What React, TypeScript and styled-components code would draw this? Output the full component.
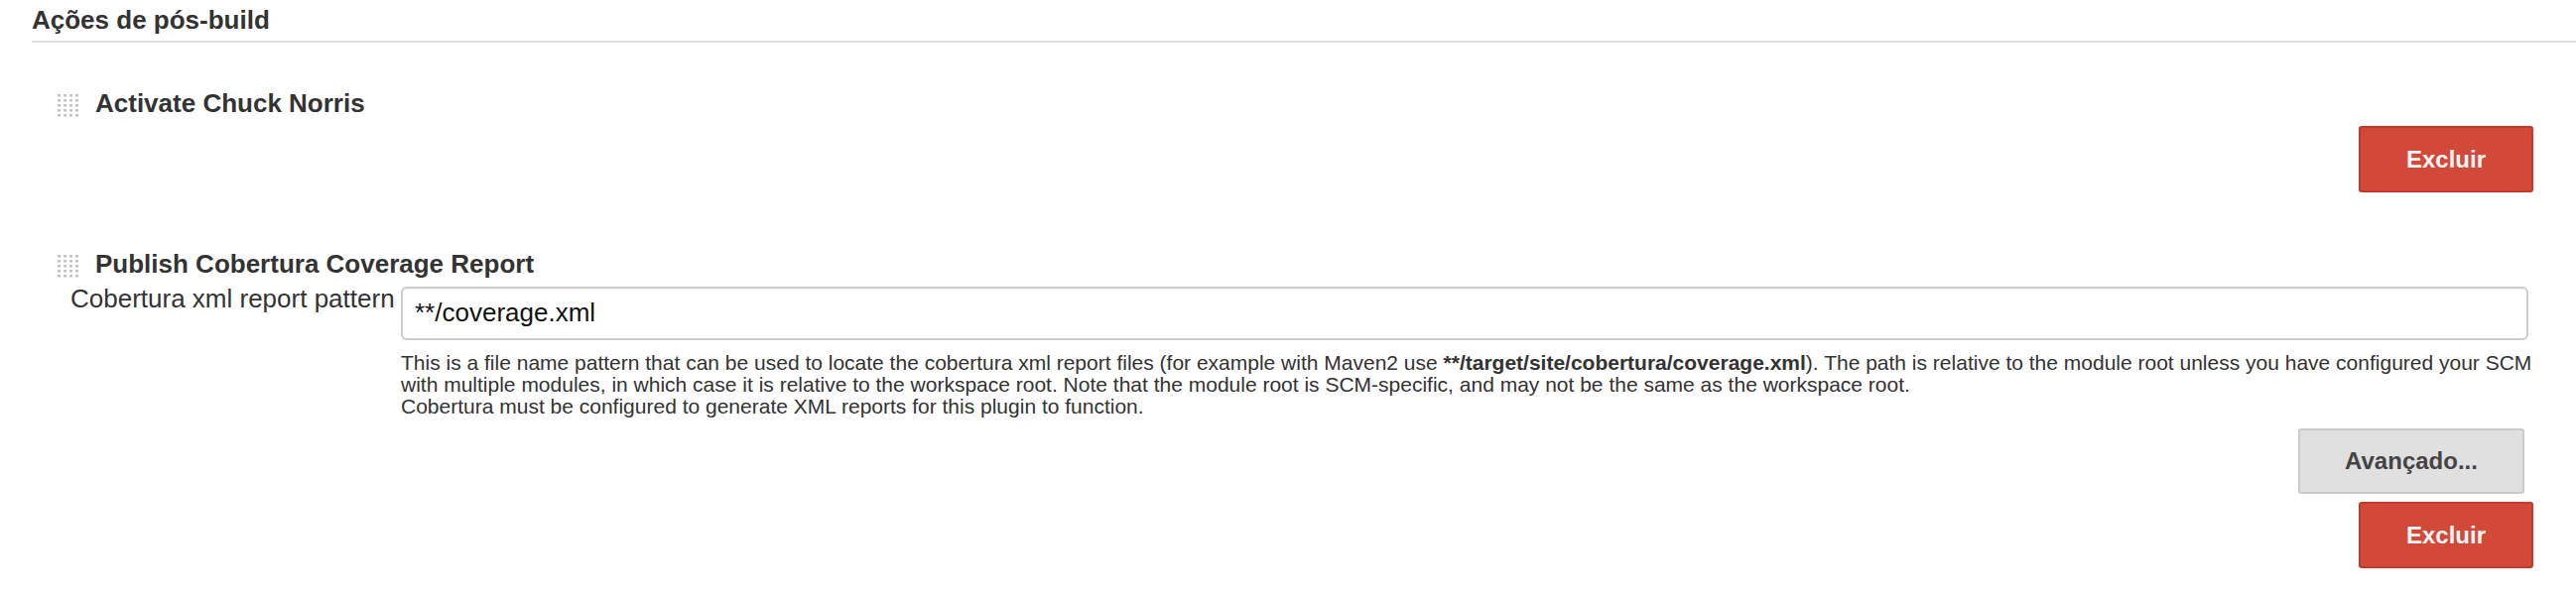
import styled, { createGlobalStyle } from 'styled-components';

const GlobalStyle = createGlobalStyle`
    html, body {
        margin: 0;
        padding: 0;
        background: #fff;
    }
    body {
        font-family: "Liberation Sans", Arial, Helvetica, sans-serif;
        color: #333;
    }
`;

function Grip() {
    const dots = [];
    for (let r = 0; r < 5; r++) {
        for (let c = 0; c < 4; c++) {
            dots.push(<rect key={`${r}-${c}`} x={1 + c * 6} y={1 + r * 5} width={3} height={2.5} fill="#c4c4c4" />);
        }
    }
    return (
        <GripIcon width="22" height="25" viewBox="0 0 22 25">
            {dots}
        </GripIcon>
    );
}

function App() {
    return (
        <Page>
            <GlobalStyle />
            <SectionTitle>Ações de pós-build</SectionTitle>

            <Block>
                <BlockHeader>
                    <Grip />
                    <BlockTitle>Activate Chuck Norris</BlockTitle>
                </BlockHeader>
                <ButtonRow>
                    <DeleteButton>Excluir</DeleteButton>
                </ButtonRow>
            </Block>

            <Block $spaced>
                <BlockHeader>
                    <Grip />
                    <BlockTitle>Publish Cobertura Coverage Report</BlockTitle>
                </BlockHeader>
                <Field>
                    <Label>Cobertura xml report pattern</Label>
                    <div>
                        <TextInput defaultValue="**/coverage.xml" />
                        <Help>
                            This is a file name pattern that can be used to locate the cobertura xml report files (for
                            example with Maven2 use <b>**/target/site/cobertura/coverage.xml</b>). The path is relative
                            to the module root unless you have configured your SCM with multiple modules, in which case
                            it is relative to the workspace root. Note that the module root is SCM-specific, and may not
                            be the same as the workspace root.
                            <br />
                            Cobertura must be configured to generate XML reports for this plugin to function.
                        </Help>
                    </div>
                </Field>
                <ButtonRow $gap>
                    <AdvancedButton>Avançado...</AdvancedButton>
                </ButtonRow>
                <ButtonRow>
                    <DeleteButton>Excluir</DeleteButton>
                </ButtonRow>
            </Block>
        </Page>
    );
}

const Page = styled.div`
    width: 2596px;
    min-height: 602px;
    box-sizing: border-box;
    padding: 5px 0 0 32px;
`;

const SectionTitle = styled.h2`
    margin: 0;
    font-size: 26px;
    line-height: 30px;
    font-weight: bold;
    color: #333;
    padding-bottom: 6px;
    border-bottom: 2px solid #e0e0e0;
`;

const Block = styled.div<{ $spaced?: boolean }>`
    padding: 0 43px 0 25px;
    margin-top: ${(p) => (p.$spaced ? '57px' : '46px')};
`;

const BlockHeader = styled.div`
    display: flex;
    align-items: flex-start;
    gap: 17px;
`;

const GripIcon = styled.svg`
    flex: none;
    margin-top: 5px;
`;

const BlockTitle = styled.div`
    font-size: 26px;
    line-height: 30px;
    font-weight: bold;
    color: #333;
`;

const Field = styled.div`
    display: grid;
    grid-template-columns: 347px 1fr;
    margin-top: 5px;
    padding-right: 5px;
`;

const Label = styled.label`
    padding-left: 14px;
    font-size: 26px;
    line-height: 30px;
    color: #333;
    white-space: nowrap;
`;

const TextInput = styled.input`
    display: block;
    box-sizing: border-box;
    width: 100%;
    height: 54px;
    margin-top: 3px;
    padding: 0 12px 2px 12px;
    border: 2px solid #cccccc;
    border-radius: 6px;
    box-shadow: inset 0 1px 2px rgba(0, 0, 0, 0.06);
    font-family: "Liberation Sans", Arial, sans-serif;
    font-size: 26px;
    color: #111;
    outline: none;
`;

const Help = styled.div`
    margin: 12px -10px 0 0;
    font-size: 21px;
    line-height: 22px;
    color: #333;
`;

const ButtonRow = styled.div<{ $gap?: boolean }>`
    display: flex;
    justify-content: flex-end;
    margin-top: ${(p) => (p.$gap ? '11px' : '8px')};
`;

const DeleteButton = styled.button`
    box-sizing: border-box;
    width: 176px;
    height: 67px;
    border: 2px solid #c13b2b;
    border-radius: 3px;
    background: #d24939;
    color: #f4f4f4;
    font-family: "Liberation Sans", Arial, sans-serif;
    font-size: 24px;
    font-weight: bold;
    cursor: pointer;
`;

const AdvancedButton = styled.button`
    box-sizing: border-box;
    width: 228px;
    height: 66px;
    margin-right: 9px;
    border: 2px solid #cbcbcb;
    border-radius: 3px;
    background: #e0e0e0;
    color: #444;
    font-family: "Liberation Sans", Arial, sans-serif;
    font-size: 24px;
    font-weight: bold;
    cursor: pointer;
`;

export default App;
